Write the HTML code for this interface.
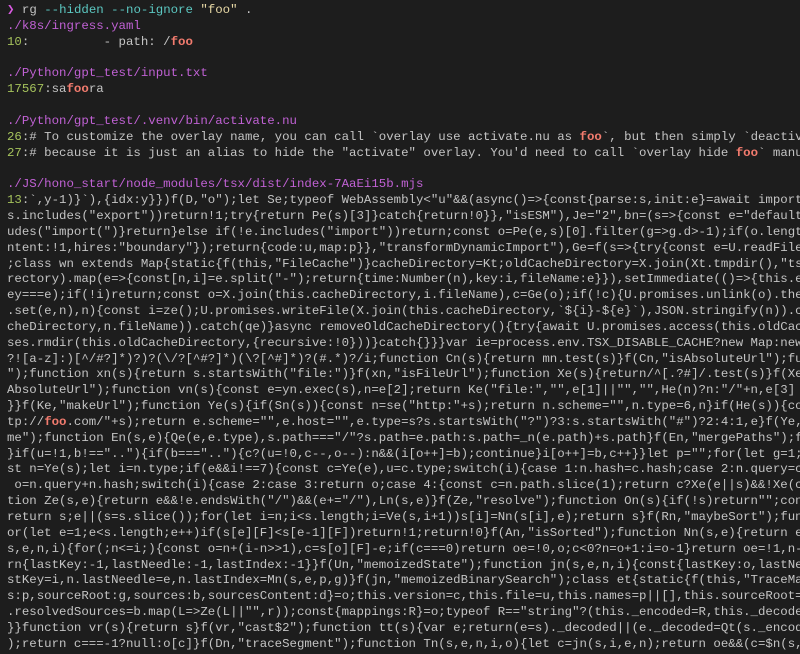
<!DOCTYPE html>
<html><head><meta charset="utf-8"><style>
html,body{margin:0;padding:0;background:#1d1d1d;width:800px;height:654px;overflow:hidden}
pre{margin:0;padding:3px 0 0 7px;font-family:"Liberation Mono",monospace;font-size:12.4px;line-height:15.85px;color:#c4c4c4;white-space:pre;overflow:hidden;width:793px}
.p{color:#c061d4}.g{color:#a5c25c}.r{color:#f27b6e;font-weight:bold}.a{color:#d85ae0;font-weight:bold}.t{color:#5cc8c2}.y{color:#e8d9a6}
</style></head><body><pre><span class="a">❯</span> rg <span class="t">--hidden --no-ignore</span> <span class="y">"foo"</span> .
<span class="p">./k8s/ingress.yaml</span>
<span class="g">10</span>:          - path: /<span class="r">foo</span>

<span class="p">./Python/gpt_test/input.txt</span>
<span class="g">17567</span>:sa<span class="r">foo</span>ra

<span class="p">./Python/gpt_test/.venv/bin/activate.nu</span>
<span class="g">26</span>:# To customize the overlay name, you can call `overlay use activate.nu as <span class="r">foo</span>`, but then simply `deactivate`
<span class="g">27</span>:# because it is just an alias to hide the "activate" overlay. You'd need to call `overlay hide <span class="r">foo</span>` manually.

<span class="p">./JS/hono_start/node_modules/tsx/dist/index-7AaEi15b.mjs</span>
<span class="g">13</span>:`,y-1)}`),{idx:y}})f(D,"o");let Se;typeof WebAssembly&lt;"u"&amp;&amp;(async()=&gt;{const{parse:s,init:e}=await import(
s.includes("export"))return!1;try{return Pe(s)[3]}catch{return!0}},"isESM"),Je="2",bn=(s=&gt;{const e="default
udes("import(")}return}else if(!e.includes("import"))return;const o=Pe(e,s)[0].filter(g=&gt;g.d&gt;-1);if(o.length
ntent:!1,hires:"boundary"});return{code:u,map:p}},"transformDynamicImport"),Ge=f(s=&gt;{try{const e=U.readFile
;class wn extends Map{static{f(this,"FileCache")}cacheDirectory=Kt;oldCacheDirectory=X.join(Xt.tmpdir(),"ts
rectory).map(e=&gt;{const[n,i]=e.split("-");return{time:Number(n),key:i,fileName:e}}),setImmediate(()=&gt;{this.e
ey===e);if(!i)return;const o=X.join(this.cacheDirectory,i.fileName),c=Ge(o);if(!c){U.promises.unlink(o).the
.set(e,n),n){const i=ze();U.promises.writeFile(X.join(this.cacheDirectory,`${i}-${e}`),JSON.stringify(n)).c
cheDirectory,n.fileName)).catch(qe)}async removeOldCacheDirectory(){try{await U.promises.access(this.oldCac
ses.rmdir(this.oldCacheDirectory,{recursive:!0}))}catch{}}}var ie=process.env.TSX_DISABLE_CACHE?new Map:new
?![a-z]:)[^/#?]*)?)?(\/?[^#?]*)(\?[^#]*)?(#.*)?/i;function Cn(s){return mn.test(s)}f(Cn,"isAbsoluteUrl");fu
");function xn(s){return s.startsWith("file:")}f(xn,"isFileUrl");function Xe(s){return/^[.?#]/.test(s)}f(Xe
AbsoluteUrl");function vn(s){const e=yn.exec(s),n=e[2];return Ke("file:","",e[1]||"","",He(n)?n:"/"+n,e[3]
}}f(Ke,"makeUrl");function Ye(s){if(Sn(s)){const n=se("http:"+s);return n.scheme="",n.type=6,n}if(He(s)){co
tp://<span class="r">foo</span>.com/"+s);return e.scheme="",e.host="",e.type=s?s.startsWith("?")?3:s.startsWith("#")?2:4:1,e}f(Ye,
me");function En(s,e){Qe(e,e.type),s.path==="/"?s.path=e.path:s.path=_n(e.path)+s.path}f(En,"mergePaths");f
}if(u=!1,b!==".."){if(b===".."){c?(u=!0,c--,o--):n&amp;&amp;(i[o++]=b);continue}i[o++]=b,c++}}let p="";for(let g=1;g
st n=Ye(s);let i=n.type;if(e&amp;&amp;i!==7){const c=Ye(e),u=c.type;switch(i){case 1:n.hash=c.hash;case 2:n.query=c
 o=n.query+n.hash;switch(i){case 2:case 3:return o;case 4:{const c=n.path.slice(1);return c?Xe(e||s)&amp;&amp;!Xe(c
tion Ze(s,e){return e&amp;&amp;!e.endsWith("/")&amp;&amp;(e+="/"),Ln(s,e)}f(Ze,"resolve");function On(s){if(!s)return"";con
return s;e||(s=s.slice());for(let i=n;i&lt;s.length;i=Ve(s,i+1))s[i]=Nn(s[i],e);return s}f(Rn,"maybeSort");fun
or(let e=1;e&lt;s.length;e++)if(s[e][F]&lt;s[e-1][F])return!1;return!0}f(An,"isSorted");function Nn(s,e){return e
s,e,n,i){for(;n&lt;=i;){const o=n+(i-n&gt;&gt;1),c=s[o][F]-e;if(c===0)return oe=!0,o;c&lt;0?n=o+1:i=o-1}return oe=!1,n-
rn{lastKey:-1,lastNeedle:-1,lastIndex:-1}}f(Un,"memoizedState");function jn(s,e,n,i){const{lastKey:o,lastNe
stKey=i,n.lastNeedle=e,n.lastIndex=Mn(s,e,p,g)}f(jn,"memoizedBinarySearch");class et{static{f(this,"TraceMa
s:p,sourceRoot:g,sources:b,sourcesContent:d}=o;this.version=c,this.file=u,this.names=p||[],this.sourceRoot=
.resolvedSources=b.map(L=&gt;Ze(L||"",r));const{mappings:R}=o;typeof R=="string"?(this._encoded=R,this._decode
}}function vr(s){return s}f(vr,"cast$2");function tt(s){var e;return(e=s)._decoded||(e._decoded=Qt(s._encod
);return c===-1?null:o[c]}f(Dn,"traceSegment");function Tn(s,e,n,i,o){let c=jn(s,i,e,n);return oe&amp;&amp;(c=$n(s,
</pre></body></html>
